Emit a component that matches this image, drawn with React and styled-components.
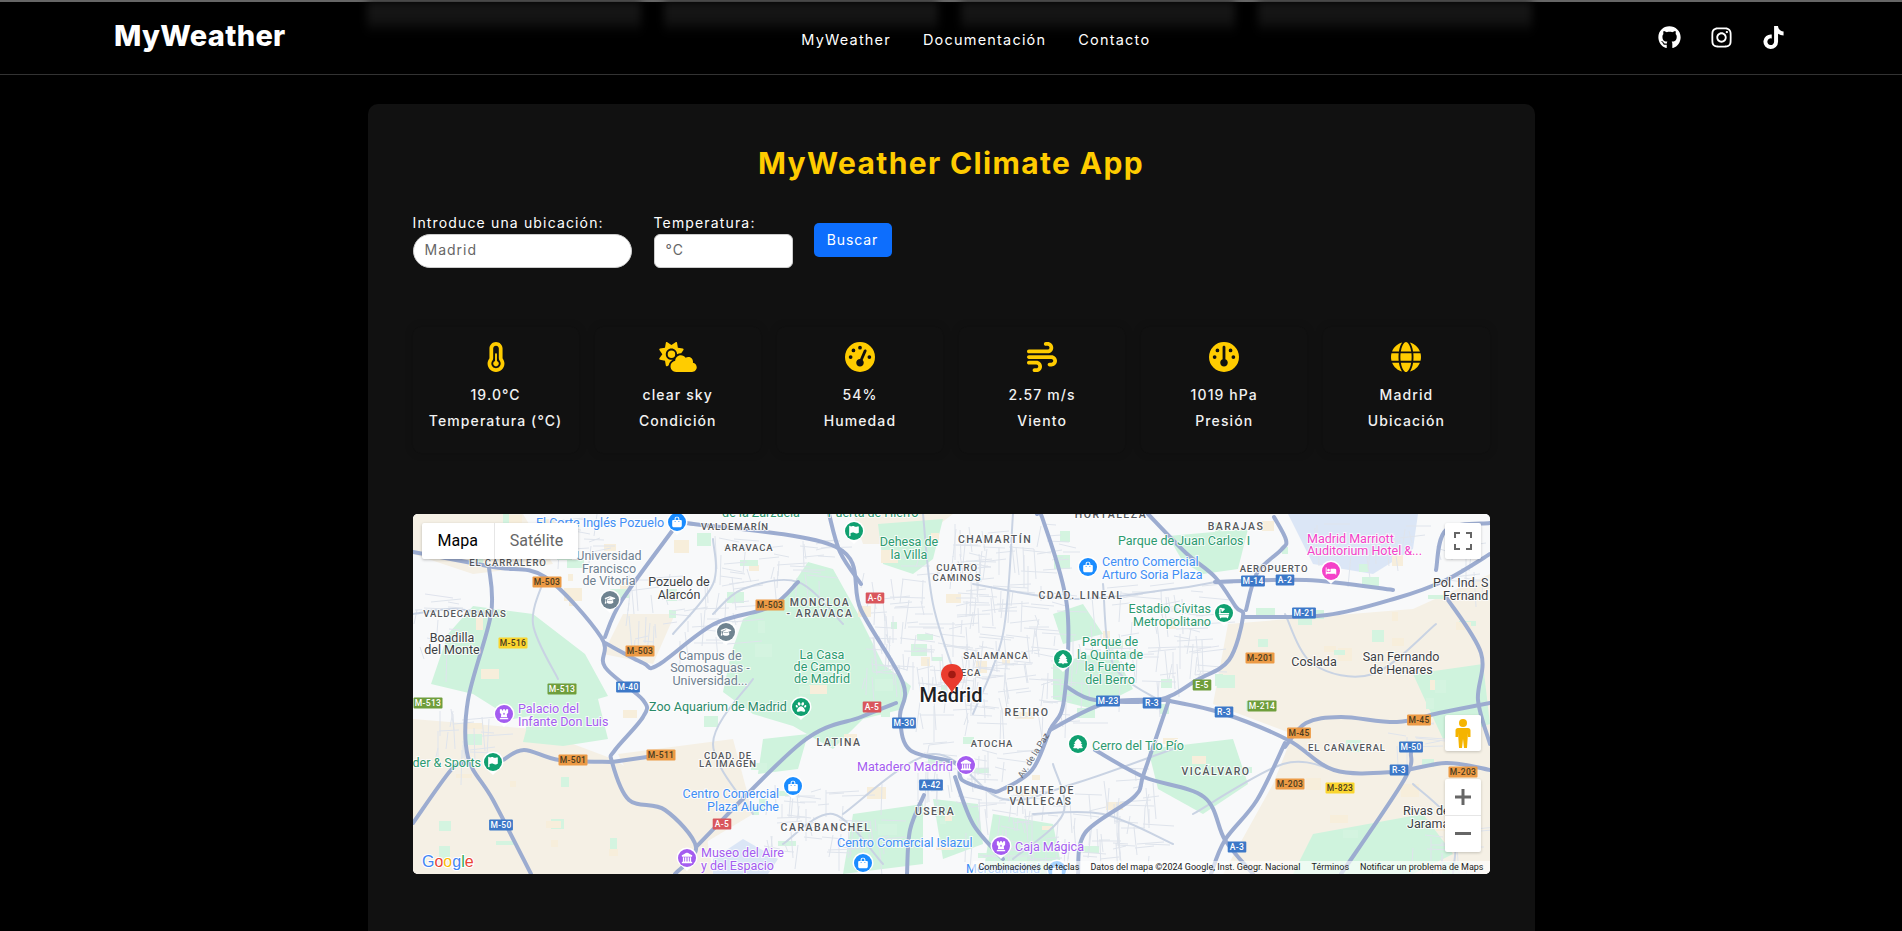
import React from "react";
import styled, { createGlobalStyle } from "styled-components";
import {
  FaGithub,
  FaInstagram,
  FaTiktok,
  FaTemperatureHalf,
  FaCloudSun,
  FaGaugeHigh,
  FaWind,
  FaGauge,
  FaGlobe,
  FaBagShopping,
  FaGraduationCap,
  FaTree,
  FaPaw,
  FaChessRook,
  FaLandmark,
  FaBed,
  FaFlag,
  FaBath,
} from "react-icons/fa6";

const stats = [
  { icon: FaTemperatureHalf, value: "19.0°C", label: "Temperatura (°C)" },
  { icon: FaCloudSun, value: "clear sky", label: "Condición", iconWidth: 38 },
  { icon: FaGaugeHigh, value: "54%", label: "Humedad" },
  { icon: FaWind, value: "2.57 m/s", label: "Viento" },
  { icon: FaGauge, value: "1019 hPa", label: "Presión" },
  { icon: FaGlobe, value: "Madrid", label: "Ubicación" },
];

// map data, in px from the map's top left corner
const tanAreas = [
  "0,0 110,0 140,50 60,60 0,40",
  "0,205 120,215 200,245 290,300 300,360 0,360",
  "210,100 262,100 240,150 190,140",
  "205,240 320,225 340,300 290,330 230,290",
  "815,110 1000,95 1077,60 1077,360 810,360 860,270 880,220 800,190",
  "440,0 540,0 500,30 450,30",
];
const greenAreas = [
  "330,105 370,85 395,48 420,55 445,100 470,150 498,172 490,195 450,205 420,235 380,212 340,200 310,178 318,140",
  "60,92 120,100 172,140 195,182 140,198 100,205 60,180 18,170 35,120",
  "120,190 185,185 195,225 150,232 110,228",
  "465,10 530,5 520,45 500,60 470,50",
  "755,22 835,15 825,55 790,60 770,48",
  "735,235 820,225 835,270 790,300 745,275",
  "640,150 700,135 720,175 680,195 640,185",
  "520,285 565,290 570,330 530,345",
  "440,300 510,290 510,350 430,360",
  "350,225 395,220 385,255 345,260",
  "640,100 670,90 690,120 650,130",
  "900,320 1010,300 1040,340 1000,360 880,360",
  "1000,160 1070,150 1077,210 1030,225",
  "580,300 640,310 650,360 570,360",
];
const waterAreas = [
  "875,0 1005,0 1000,35 960,60 900,50",
  "300,345 330,325 365,345 355,360 300,360",
];
const highways = [
  "76,53 78,100 55,186 55,243 80,286 118,360",
  "0,38 80,53 132,63 188,123 192,153 230,186 230,203 202,236 199,248 216,286 252,296 283,333 262,360",
  "283,333 388,229 448,203 483,189",
  "199,248 248,241",
  "90,246 111,236 146,246 199,248",
  "0,309 38,256 53,249",
  "192,129 230,149 245,151 301,110 357,93 385,68",
  "262,13 209,86 192,123",
  "273,9 423,33 448,96 490,169 487,203 497,236 542,249 549,266 577,276 588,276 619,256 637,216 651,186 654,92 630,6 624,0",
  "416,0 427,38 448,70",
  "735,0 773,39 802,63 823,93 830,103 816,146 784,166 745,186 682,186 654,173",
  "802,68 893,66 980,76",
  "830,103 914,101 984,84 1033,66 1077,40",
  "1023,56 1033,16 1077,9",
  "1033,83 1068,139 1065,186 1077,230",
  "861,3 873,26 868,36 844,59 833,96",
  "752,186 809,199 875,226 921,256 980,258 1033,249 1077,256",
  "637,216 693,189 752,186",
  "872,233 893,209 928,203 984,208 1026,199 1077,189",
  "872,229 844,286 812,326 798,360",
  "756,186 731,259 721,283 672,319 665,360",
  "682,236 731,263 791,283 812,326 840,360",
  "998,239 991,266 928,360",
  "511,281 497,316 494,360",
  "542,263 560,310 590,345",
];
const minorRoads = [
  "300,100 330,75 385,68 430,110",
  "340,165 300,230 340,300",
  "600,0 590,120 560,200",
  "510,0 520,90 545,170",
  "430,300 520,240 590,285 660,270 760,235",
  "370,330 420,300 470,350",
  "560,70 660,85 760,75 802,68",
  "690,70 700,150 745,186",
  "872,100 900,150 960,160 1023,110",
  "1000,270 1040,310 1040,360",
  "780,300 870,250 921,256",
  "0,100 40,95 78,100",
  "132,63 120,110 145,165",
  "300,25 300,70 260,120",
  "620,300 690,300 760,330",
  "600,345 650,300 640,250",
];
const streetBlocks = [
  [215, 60, 110, 70],
  [300, 20, 110, 50],
  [20, 190, 60, 50],
  [130, 0, 60, 40],
  [450, 40, 120, 130],
  [500, 120, 160, 90],
  [540, 10, 110, 110],
  [660, 70, 130, 100],
  [500, 230, 110, 60],
  [550, 280, 130, 70],
  [680, 250, 60, 100],
  [350, 270, 120, 70],
  [970, 205, 50, 30],
  [1000, 310, 60, 50],
  [900, 10, 100, 30],
  [1020, 30, 50, 40],
  [0, 80, 40, 60],
];

// small repeatable random so the streets stay put between renders
let seed = 17;
const rnd = () => {
  seed = (seed * 16807) % 2147483647;
  return seed / 2147483647;
};
const streets = streetBlocks
  .map(([x, y, w, h]) => {
    let d = "";
    const count = Math.round((w * h) / 150);
    for (let i = 0; i < count; i++) {
      const px = Math.round(x + rnd() * w);
      const py = Math.round(y + rnd() * h);
      const flat = rnd() > 0.5;
      const len = 10 + rnd() * 26;
      const skew = rnd() * 8 - 4;
      d += flat
        ? `M${px} ${py}l${len.toFixed(0)} ${skew.toFixed(0)}`
        : `M${px} ${py}l${skew.toFixed(0)} ${len.toFixed(0)}`;
    }
    return d;
  })
  .join("");
const specks = Array.from({ length: 130 }, () => ({
  x: Math.round(rnd() * 1060),
  y: Math.round(rnd() * 350),
  w: 5 + Math.round(rnd() * 14),
  h: 4 + Math.round(rnd() * 10),
  warm: rnd() > 0.6,
}));

// turns "x,y x,y ..." into a smooth curve through the points
const smooth = (points) => {
  const pts = points.split(" ").map((p) => p.split(",").map(Number));
  let d = `M${pts[0][0]} ${pts[0][1]}`;
  for (let i = 0; i < pts.length - 1; i++) {
    const a = pts[i - 1] || pts[i];
    const b = pts[i];
    const c = pts[i + 1];
    const e = pts[i + 2] || c;
    const c1x = b[0] + (c[0] - a[0]) / 6;
    const c1y = b[1] + (c[1] - a[1]) / 6;
    const c2x = c[0] - (e[0] - b[0]) / 6;
    const c2y = c[1] - (e[1] - b[1]) / 6;
    d += `C${c1x.toFixed(1)} ${c1y.toFixed(1)} ${c2x.toFixed(1)} ${c2y.toFixed(1)} ${c[0]} ${c[1]}`;
  }
  return d;
};

const labels = [
  ["El Corte Inglés Pozuelo", 187, 13, "shop"],
  ["de la Zarzuela", 348, 3, "park"],
  ["Puerta de Hierro", 460, 3, "park"],
  ["HORTALEZA", 698, 4, "district"],
  ["VALDEMARÍN", 322, 16, "caps"],
  ["ARAVACA", 336, 37, "caps"],
  ["Universidad", 196, 46, "edu"],
  ["Francisco", 196, 59, "edu"],
  ["de Vitoria", 196, 71, "edu"],
  ["EL CARRALERO", 95, 52, "caps"],
  ["Pozuelo de", 266, 72, "town"],
  ["Alarcón", 266, 85, "town"],
  ["MONCLOA", 407, 92, "district"],
  ["- ARAVACA", 407, 103, "district"],
  ["VALDECABAÑAS", 52, 103, "caps"],
  ["Boadilla", 39, 128, "town"],
  ["del Monte", 39, 140, "town"],
  ["Campus de", 297, 146, "edu"],
  ["Somosaguas -", 297, 158, "edu"],
  ["Universidad...", 297, 171, "edu"],
  ["La Casa", 409, 145, "park"],
  ["de Campo", 409, 157, "park"],
  ["de Madrid", 409, 169, "park"],
  ["Dehesa de", 496, 32, "park"],
  ["la Villa", 496, 45, "park"],
  ["CUATRO", 544, 57, "caps"],
  ["CAMINOS", 544, 67, "caps"],
  ["CHAMARTÍN", 582, 29, "district"],
  ["BARAJAS", 823, 16, "district"],
  ["Parque de Juan Carlos I", 771, 31, "park"],
  ["AEROPUERTO", 861, 58, "caps"],
  ["CDAD. LINEAL", 668, 85, "district"],
  ["Coslada", 901, 152, "town"],
  ["San Fernando", 988, 147, "town"],
  ["de Henares", 988, 160, "town"],
  ["Parque de", 697, 132, "park"],
  ["la Quinta de", 697, 145, "park"],
  ["la Fuente", 697, 157, "park"],
  ["del Berro", 697, 170, "park"],
  ["SALAMANCA", 583, 145, "caps"],
  ["ECA", 558, 162, "caps"],
  ["Zoo Aquarium de Madrid", 305, 197, "zoo"],
  ["LATINA", 426, 232, "district"],
  ["CDAD. DE", 315, 245, "caps"],
  ["LA IMAGEN", 315, 253, "caps"],
  ["USERA", 522, 301, "district"],
  ["CARABANCHEL", 413, 317, "district"],
  ["RETIRO", 614, 202, "district"],
  ["ATOCHA", 579, 233, "caps"],
  ["EL CAÑAVERAL", 934, 237, "caps"],
  ["VICÁLVARO", 803, 261, "district"],
  ["PUENTE DE", 628, 280, "district"],
  ["VALLECAS", 628, 291, "district"],
];
const leftLabels = [
  ["Madrid Marriott", 894, 29, "hotel"],
  ["Auditorium Hotel &...", 894, 41, "hotel"],
  ["Centro Comercial", 689, 52, "shop"],
  ["Arturo Soria Plaza", 689, 65, "shop"],
  ["Pol. Ind. S", 1020, 73, "town"],
  ["Fernand", 1030, 86, "town"],
  ["Palacio del", 105, 199, "poi"],
  ["Infante Don Luis", 105, 212, "poi"],
  ["Matadero Madrid", 444, 257, "poi"],
  ["Centro Comercial Islazul", 424, 333, "shop"],
  ["Mercamadrid", 553, 359, "shop"],
  ["Museo del Aire", 288, 343, "poi"],
  ["y del Espacio", 288, 356, "poi"],
  ["Cerro del Tío Pío", 679, 236, "park"],
  ["Rivas de", 990, 301, "town"],
  ["Jarama", 994, 314, "town"],
  ["Caja Mágica", 602, 337, "poi"],
];
const rightLabels = [
  ["Estadio Cívitas", 798, 99, "park"],
  ["Metropolitano", 798, 112, "park"],
  ["der & Sports", 68, 253, "park"],
  ["Centro Comercial", 366, 284, "shop"],
  ["Plaza Aluche", 366, 297, "shop"],
];
const shields = [
  ["M-503", 134, 68, "orange"],
  ["M-503", 357, 91, "orange"],
  ["M-503", 227, 137, "orange"],
  ["A-6", 462, 84, "red"],
  ["M-516", 100, 129, "yellow"],
  ["M-513", 149, 175, "green"],
  ["M-513", 15, 189, "green"],
  ["M-40", 215, 173, "blue"],
  ["M-14", 840, 67, "blue"],
  ["A-2", 872, 66, "blue"],
  ["M-21", 891, 99, "blue"],
  ["M-201", 847, 144, "orange"],
  ["E-5", 789, 171, "green"],
  ["A-5", 459, 193, "red"],
  ["M-30", 491, 209, "blue"],
  ["A-42", 518, 271, "blue"],
  ["M-501", 160, 246, "orange"],
  ["M-511", 248, 241, "orange"],
  ["M-50", 88, 311, "blue"],
  ["A-5", 309, 310, "red"],
  ["M-23", 695, 187, "blue"],
  ["R-3", 739, 189, "blue"],
  ["R-3", 811, 198, "blue"],
  ["M-214", 849, 192, "green"],
  ["M-45", 1006, 206, "orange"],
  ["M-45", 886, 219, "orange"],
  ["M-50", 998, 233, "blue"],
  ["R-3", 986, 256, "blue"],
  ["M-203", 1050, 258, "orange"],
  ["M-203", 877, 270, "orange"],
  ["M-823", 927, 274, "yellow"],
  ["A-3", 824, 333, "blue"],
];
const pins = [
  [264, 8, "#1a8cff", FaBagShopping],
  [441, 17, "#10a070", FaFlag],
  [197, 86, "#6f8390", FaGraduationCap],
  [313, 118, "#6f8390", FaGraduationCap],
  [675, 53, "#1a8cff", FaBagShopping],
  [918, 57, "#f442c8", FaBed],
  [811, 99, "#10a070", FaBath],
  [650, 145, "#10a070", FaTree],
  [91, 200, "#a45cf0", FaChessRook],
  [388, 193, "#10a070", FaPaw],
  [80, 248, "#10a070", FaFlag],
  [380, 272, "#1a8cff", FaBagShopping],
  [553, 251, "#a45cf0", FaLandmark],
  [665, 230, "#10a070", FaTree],
  [450, 349, "#1a8cff", FaBagShopping],
  [274, 344, "#a45cf0", FaLandmark],
  [588, 332, "#a45cf0", FaChessRook],
  [644, 356, "#1a8cff", FaBagShopping],
];

const toneColors = {
  shop: "#3f8ef5",
  edu: "#6e8090",
  caps: "#55585c",
  district: "#55585c",
  town: "#3c4043",
  park: "#2c9a70",
  zoo: "#2a8a68",
  hotel: "#f442c8",
  poi: "#a45cf0",
};
const shieldColors = {
  orange: "#ec9a45",
  red: "#d9565c",
  yellow: "#fad52f",
  green: "#6f9e3c",
  blue: "#3c78c8",
};

const GlobalStyle = createGlobalStyle`
  html, body {
    margin: 0;
    height: 100%;
    overflow: hidden;
    background: #000;
  }
  body {
    font-family: Inter, "Liberation Sans", sans-serif;
    color: #fff;
  }
  * {
    box-sizing: border-box;
  }
`;

const Header = styled.header`
  position: relative;
  height: 75px;
  padding: 0 117px 0 114px;
  display: flex;
  align-items: center;
  justify-content: space-between;
  background: #000;
  border-top: 2px solid #666;
  border-bottom: 1px solid #333;
`;

const BlurredCards = styled.div`
  position: absolute;
  top: 0;
  left: 367px;
  display: flex;
  gap: 23px;
`;

const BlurredCard = styled.div`
  width: 274px;
  height: 32px;
  background: linear-gradient(#151515 50%, #000);
  filter: blur(4px);
`;

const Logo = styled.div`
  position: relative;
  font-size: 29px;
  font-weight: 800;
  letter-spacing: 0.3px;
  margin-top: -6px;
`;

const Nav = styled.nav`
  position: relative;
  display: flex;
  gap: 32px;
  margin-left: 8px;
  margin-top: 3px;
`;

const NavLink = styled.a`
  font-size: 14.5px;
  font-weight: 400;
  letter-spacing: 1.2px;
  color: #fff;
`;

const Socials = styled.div`
  position: relative;
  display: flex;
  align-items: center;
  gap: 29px;
  font-size: 23px;
  margin-top: -2px;
`;

const Main = styled.main`
  padding-top: 29px;
  display: flex;
  justify-content: center;
`;

const Panel = styled.section`
  width: 1167px;
  min-height: 900px;
  padding: 42px 45px;
  background: #111;
  border-radius: 10px;
`;

const Title = styled.h1`
  margin: 0 0 34px;
  height: 34px;
  line-height: 34px;
  text-align: center;
  font-size: 30px;
  font-weight: 700;
  letter-spacing: 1.35px;
  color: #ffcc00;
`;

const SearchForm = styled.form`
  display: flex;
  align-items: flex-start;
  gap: 22px;
`;

const Field = styled.label`
  display: flex;
  flex-direction: column;
  gap: 3px;
  font-size: 14px;
  line-height: 17px;
  letter-spacing: 1.15px;
`;

const Input = styled.input`
  width: ${(p) => p.$width}px;
  height: 34px;
  padding: 0 11px 3px;
  border: 1px solid #ccc;
  border-radius: ${(p) => (p.$pill ? "17px" : "6px")};
  background: #fff;
  font: 14px Inter, sans-serif;
  letter-spacing: 1px;
  &::placeholder {
    color: #666;
  }
`;

const SearchButton = styled.button`
  width: 78px;
  height: 34px;
  margin-top: 9px;
  margin-left: -1px;
  padding: 0 0 2px;
  border: 0;
  border-radius: 5px;
  background: #0d6efd;
  color: #fff;
  font: 14px Inter, sans-serif;
  letter-spacing: 0.9px;
`;

const StatsGrid = styled.div`
  margin-top: 59px;
  display: grid;
  grid-template-columns: repeat(6, 1fr);
  gap: 16px;
`;

const StatCard = styled.div`
  height: 126px;
  padding-top: 15px;
  display: flex;
  flex-direction: column;
  align-items: center;
  background: #111;
  border-radius: 8px;
  box-shadow: 0 0 8px rgba(0, 0, 0, 0.2);
  font-size: 14px;
  font-weight: 500;
  letter-spacing: 1.1px;
  color: #f2f2f2;
  svg {
    width: ${(p) => p.$iconWidth || 30}px;
    height: 30px;
    color: #ffcc00;
  }
`;

const StatValue = styled.div`
  margin-top: 14px;
  line-height: 17px;
`;

const StatLabel = styled.div`
  margin-top: 9px;
  line-height: 17px;
`;

const MapFrame = styled.div`
  position: relative;
  margin-top: 61px;
  height: 360px;
  border-radius: 5px;
  overflow: hidden;
  background: #f8f9fa;
  font-family: Roboto, sans-serif;
`;

const MapCanvas = styled.svg`
  display: block;
  width: 100%;
  height: 100%;
  font-family: Roboto, sans-serif;
`;

const Route = styled.path`
  fill: none;
  stroke-linecap: round;
  stroke: ${(p) => p.$color};
  stroke-width: ${(p) => p.$w};
`;

const MapText = styled.text`
  fill: ${(p) => toneColors[p.$tone]};
  text-anchor: ${(p) => p.$anchor || "middle"};
  font-size: ${(p) =>
    p.$tone === "caps" ? "9.5px" : p.$tone === "district" ? "10.5px" : "12.5px"};
  font-weight: ${(p) => (p.$tone === "caps" || p.$tone === "district" ? 500 : 400)};
  letter-spacing: ${(p) =>
    p.$tone === "caps" ? "0.9px" : p.$tone === "district" ? "1.5px" : "0"};
  stroke: #fff;
  stroke-width: 2px;
  stroke-opacity: 0.8;
  paint-order: stroke;
`;

const CityName = styled.text`
  fill: #202124;
  text-anchor: middle;
  font-size: 20px;
  font-weight: 500;
  stroke: #fff;
  stroke-width: 2.5px;
  paint-order: stroke;
`;

const ShieldText = styled.text`
  fill: ${(p) => (p.$dark ? "#4a3a20" : "#fff")};
  text-anchor: middle;
  font-size: 8.5px;
  font-weight: 500;
  letter-spacing: 0.3px;
`;

const RoadName = styled.text`
  fill: #5f6368;
  font-size: 9px;
  text-anchor: middle;
`;

const GoogleMark = styled.text`
  font-family: "Liberation Sans", sans-serif;
  font-size: 16px;
  font-weight: 400;
  stroke: #fff;
  stroke-width: 2px;
  paint-order: stroke;
`;

const MapTypes = styled.div`
  position: absolute;
  top: 9px;
  left: 9px;
  height: 36px;
  display: flex;
  background: #fff;
  border-radius: 2px;
  box-shadow: 0 1px 3px rgba(0, 0, 0, 0.25);
`;

const MapType = styled.div`
  padding: 0 ${(p) => (p.$active ? "16px" : "15px")};
  line-height: 36px;
  font-size: 16px;
  color: ${(p) => (p.$active ? "#000" : "#666")};
  border-right: ${(p) => (p.$active ? "1px solid #e6e6e6" : "0")};
`;

const MapControl = styled.div`
  position: absolute;
  right: 9px;
  top: ${(p) => p.$top}px;
  width: 36px;
  height: ${(p) => p.$height || 36}px;
  display: flex;
  flex-direction: column;
  align-items: center;
  justify-content: center;
  background: #fff;
  border-radius: 2px;
  box-shadow: 0 1px 3px rgba(0, 0, 0, 0.2);
  color: #666;
`;

const ZoomButton = styled.div`
  width: 100%;
  flex: 1;
  display: flex;
  align-items: center;
  justify-content: center;
  & + & {
    box-shadow: 0 -1px 0 0 #e6e6e6;
  }
`;

const Attribution = styled.div`
  position: absolute;
  right: 0;
  bottom: 0;
  height: 13px;
  padding: 0 6px 0 5px;
  display: flex;
  gap: 11px;
  background: rgba(255, 255, 255, 0.62);
  font-size: 9px;
  line-height: 13px;
  color: #222;
`;

const Pin = ({ x, y, color, icon: Icon }) => (
  <g>
    <path
      d={`M${x - 10.5} ${y}a10.5 10.5 0 0 1 21 0c0 6-6 8-10.5 13c-4.5-5-10.5-7-10.5-13z`}
      fill="#fff"
    />
    <circle cx={x} cy={y} r="9" fill={color} />
    <Icon x={x - 5.5} y={y - 5.5} size={11} color="#fff" />
  </g>
);

const Shield = ({ text, x, y, kind }) => {
  const w = text.length * 5.2 + 3;
  const dark = kind === "orange" || kind === "yellow";
  return (
    <g>
      <rect x={x - w / 2} y={y - 5.5} width={w} height={11} rx="1" fill={shieldColors[kind]} />
      <ShieldText x={x} y={y + 3} $dark={dark}>
        {text}
      </ShieldText>
    </g>
  );
};

const MapArt = () => (
  <MapCanvas viewBox="0 0 1077 360">
    <rect width="1077" height="360" fill="#f8f9fa" />
    {tanAreas.map((p) => (
      <polygon key={p} points={p} fill="#f5f0e5" />
    ))}
    {greenAreas.map((p) => (
      <polygon key={p} points={p} fill="#cff3dd" />
    ))}
    {waterAreas.map((p) => (
      <polygon key={p} points={p} fill="#dbe6f6" />
    ))}
    {specks.map((s, i) => (
      <rect
        key={i}
        x={s.x}
        y={s.y}
        width={s.w}
        height={s.h}
        fill={s.warm ? "#f7eedb" : "#d4f4e0"}
      />
    ))}
    <path d={streets} fill="none" stroke="#dfe4ec" strokeWidth="1" />
    {minorRoads.map((p) => (
      <Route key={p} d={smooth(p)} $color="#c9d3e3" $w={2} />
    ))}
    {highways.map((p) => (
      <Route key={p} d={smooth(p)} $color="#9cacd0" $w={4} />
    ))}
    {labels.map(([t, x, y, tone]) => (
      <MapText key={t + x + y} x={x} y={y} $tone={tone}>
        {t}
      </MapText>
    ))}
    {leftLabels.map(([t, x, y, tone]) => (
      <MapText key={t + x + y} x={x} y={y} $tone={tone} $anchor="start">
        {t}
      </MapText>
    ))}
    {rightLabels.map(([t, x, y, tone]) => (
      <MapText key={t + x + y} x={x} y={y} $tone={tone} $anchor="end">
        {t}
      </MapText>
    ))}
    <RoadName transform="translate(623 243) rotate(-58)">Av. de la Paz</RoadName>
    {shields.map(([t, x, y, kind]) => (
      <Shield key={t + x + y} text={t} x={x} y={y} kind={kind} />
    ))}
    {pins.map(([x, y, color, icon]) => (
      <Pin key={`${x}-${y}`} x={x} y={y} color={color} icon={icon} />
    ))}
    <CityName x="538" y="188">
      Madrid
    </CityName>
    <path
      d="M539 150c-6.500 0-11 4.800-11 10.500c0 7.500 8 10.500 11 19c3-8.500 11-11.500 11-19c0-5.700-4.500-10.500-11-10.500z"
      fill="#ea3b2e"
    />
    <circle cx="539" cy="160.500" r="3.800" fill="#a31a12" />
    <GoogleMark x="9" y="353">
      <tspan fill="#4285f4">G</tspan>
      <tspan fill="#ea4335">o</tspan>
      <tspan fill="#fbbc05">o</tspan>
      <tspan fill="#4285f4">g</tspan>
      <tspan fill="#34a853">l</tspan>
      <tspan fill="#ea4335">e</tspan>
    </GoogleMark>
  </MapCanvas>
);

const MapView = () => (
  <MapFrame>
    <MapArt />
    <MapTypes>
      <MapType $active>Mapa</MapType>
      <MapType>Satélite</MapType>
    </MapTypes>
    <MapControl $top={9}>
      <svg width="18" height="18" viewBox="0 0 18 18" fill="none" stroke="#666" strokeWidth="2">
        <path d="M1 6V1h5M12 1h5v5M17 12v5h-5M6 17H1v-5" />
      </svg>
    </MapControl>
    <MapControl $top={201}>
      <svg width="16" height="30" viewBox="0 0 16 30">
        <circle cx="8" cy="5" r="4" fill="#f5b400" />
        <path
          d="M3 10h10c1.500 0 2.500 1 2.500 2.500V19h-2.500v-4l-1 15H9l-1-9l-1 9H4L3 15v4H.5v-6.500C.5 11 1.500 10 3 10z"
          fill="#f5b400"
        />
      </svg>
    </MapControl>
    <MapControl $top={265} $height={73}>
      <ZoomButton>
        <svg width="16" height="16" viewBox="0 0 16 16" fill="#666">
          <path d="M6.500 0h3v6.500H16v3H9.500V16h-3V9.500H0v-3h6.500z" />
        </svg>
      </ZoomButton>
      <ZoomButton>
        <svg width="16" height="4" viewBox="0 0 16 4" fill="#666">
          <rect width="16" height="3" />
        </svg>
      </ZoomButton>
    </MapControl>
    <Attribution>
      <span>Combinaciones de teclas</span>
      <span>Datos del mapa ©2024 Google, Inst. Geogr. Nacional</span>
      <span>Términos</span>
      <span>Notificar un problema de Maps</span>
    </Attribution>
  </MapFrame>
);

const App = () => {
  return (
    <>
      <GlobalStyle />
      <Header>
        <BlurredCards>
          <BlurredCard />
          <BlurredCard />
          <BlurredCard />
          <BlurredCard />
        </BlurredCards>
        <Logo>MyWeather</Logo>
        <Nav>
          <NavLink>MyWeather</NavLink>
          <NavLink>Documentación</NavLink>
          <NavLink>Contacto</NavLink>
        </Nav>
        <Socials>
          <FaGithub />
          <FaInstagram />
          <FaTiktok />
        </Socials>
      </Header>
      <Main>
        <Panel>
          <Title>MyWeather Climate App</Title>
          <SearchForm>
            <Field>
              Introduce una ubicación:
              <Input $width={219} $pill placeholder="Madrid" />
            </Field>
            <Field>
              Temperatura:
              <Input $width={139} placeholder="°C" />
            </Field>
            <SearchButton type="button">Buscar</SearchButton>
          </SearchForm>
          <StatsGrid>
            {stats.map(({ icon: Icon, value, label, iconWidth }) => (
              <StatCard key={label} $iconWidth={iconWidth}>
                <Icon />
                <StatValue>{value}</StatValue>
                <StatLabel>{label}</StatLabel>
              </StatCard>
            ))}
          </StatsGrid>
          <MapView />
        </Panel>
      </Main>
    </>
  );
};

export default App;
